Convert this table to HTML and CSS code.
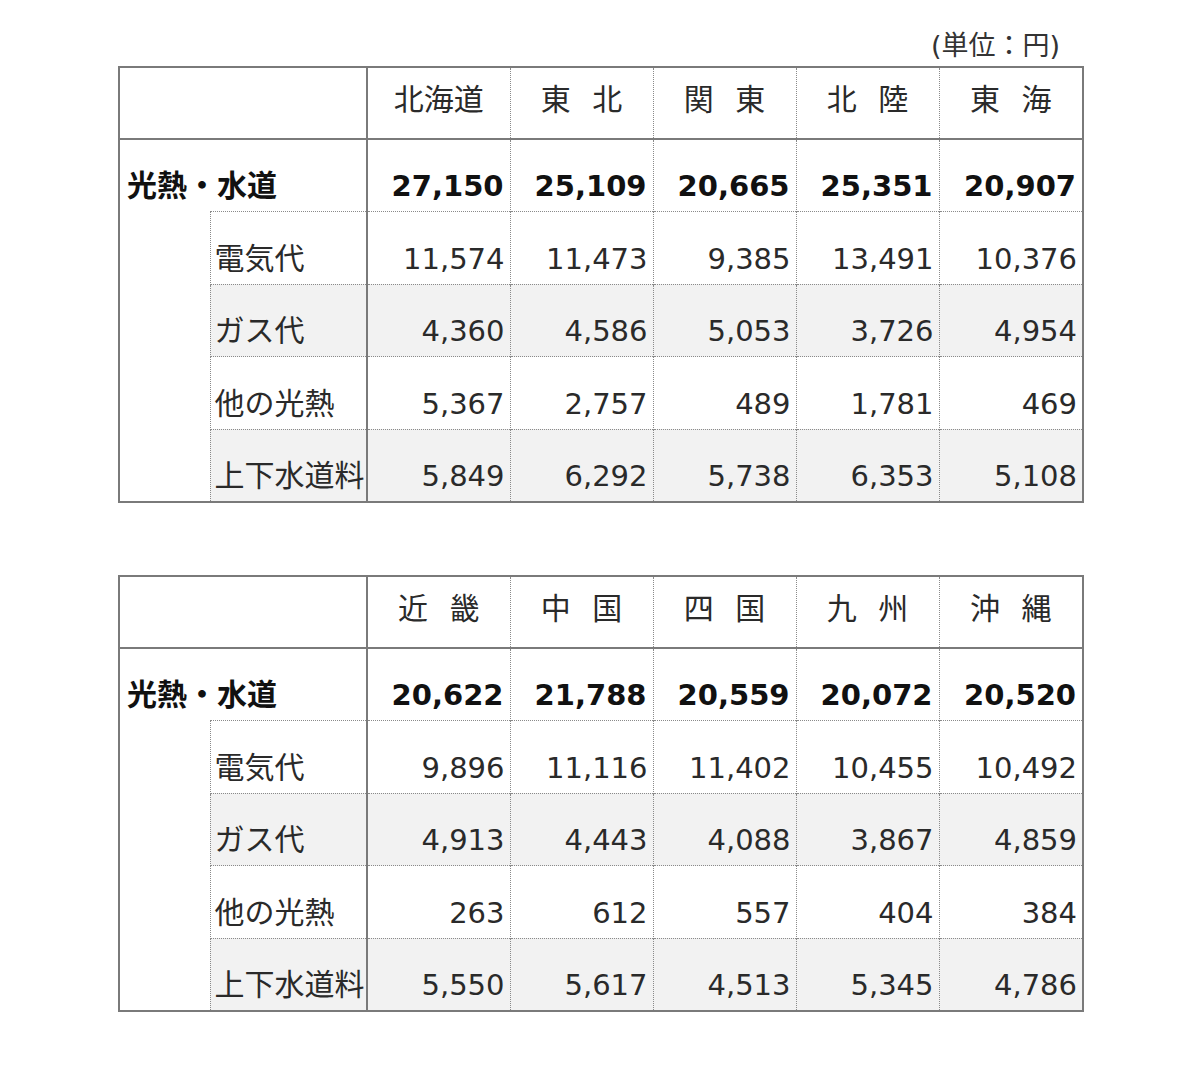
FILE: index.html
```html
<!DOCTYPE html>
<html lang="ja">
<head>
<meta charset="utf-8">
<title>光熱・水道</title>
<link rel="stylesheet" href="styles.css">
</head>
<body>
<div class="page">
  <div class="unit">(単位：円)</div>
  <table class="grid">
    <colgroup>
      <col class="c-indent"><col class="c-item"><col class="c-num"><col class="c-num"><col class="c-num"><col class="c-num"><col class="c-last">
    </colgroup>
    <tr class="head">
      <th colspan="2" class="blank"></th>
      <th class="first">北海道</th><th>東 北</th><th>関 東</th><th>北 陸</th><th>東 海</th>
    </tr>
    <tr class="total">
      <th colspan="2" class="cat">光熱・水道</th>
      <td class="first">27,150</td><td>25,109</td><td>20,665</td><td>25,351</td><td>20,907</td>
    </tr>
    <tr class="sub">
      <td rowspan="4" class="indent"></td>
      <th class="item">電気代</th>
      <td class="first">11,574</td><td>11,473</td><td>9,385</td><td>13,491</td><td>10,376</td>
    </tr>
    <tr class="sub alt">
      <th class="item">ガス代</th>
      <td class="first">4,360</td><td>4,586</td><td>5,053</td><td>3,726</td><td>4,954</td>
    </tr>
    <tr class="sub">
      <th class="item">他の光熱</th>
      <td class="first">5,367</td><td>2,757</td><td>489</td><td>1,781</td><td>469</td>
    </tr>
    <tr class="sub alt">
      <th class="item">上下水道料</th>
      <td class="first">5,849</td><td>6,292</td><td>5,738</td><td>6,353</td><td>5,108</td>
    </tr>
  </table>

  <table class="grid second">
    <colgroup>
      <col class="c-indent"><col class="c-item"><col class="c-num"><col class="c-num"><col class="c-num"><col class="c-num"><col class="c-last">
    </colgroup>
    <tr class="head">
      <th colspan="2" class="blank"></th>
      <th class="first">近 畿</th><th>中 国</th><th>四 国</th><th>九 州</th><th>沖 縄</th>
    </tr>
    <tr class="total">
      <th colspan="2" class="cat">光熱・水道</th>
      <td class="first">20,622</td><td>21,788</td><td>20,559</td><td>20,072</td><td>20,520</td>
    </tr>
    <tr class="sub">
      <td rowspan="4" class="indent"></td>
      <th class="item">電気代</th>
      <td class="first">9,896</td><td>11,116</td><td>11,402</td><td>10,455</td><td>10,492</td>
    </tr>
    <tr class="sub alt">
      <th class="item">ガス代</th>
      <td class="first">4,913</td><td>4,443</td><td>4,088</td><td>3,867</td><td>4,859</td>
    </tr>
    <tr class="sub">
      <th class="item">他の光熱</th>
      <td class="first">263</td><td>612</td><td>557</td><td>404</td><td>384</td>
    </tr>
    <tr class="sub alt">
      <th class="item">上下水道料</th>
      <td class="first">5,550</td><td>5,617</td><td>4,513</td><td>5,345</td><td>4,786</td>
    </tr>
  </table>
</div>
</body>
</html>
```

FILE: styles.css
```css
html, body {
  margin: 0;
  padding: 0;
  background: #ffffff;
}

body {
  font-family: "DejaVu Sans", "Noto Sans CJK JP", sans-serif;
  color: #1e1e1e;
}

.page {
  width: 964px;
  margin-left: 118px;
  padding-top: 29px;
}

.unit {
  text-align: right;
  font-size: 27px;
  line-height: 34px;
  padding-right: 22px;
  margin-bottom: 3px;
  color: #333;
}

.grid {
  width: 964px;
  border-collapse: collapse;
  table-layout: fixed;
  border: 2px solid #7a7a7a;
}

.grid.second {
  margin-top: 72px;
}

.c-indent { width: 91px; }
.c-item { width: 157px; }
.c-num { width: 143px; }
.c-last { width: 144px; }

.grid th,
.grid td {
  padding: 0;
  border: none;
  font-weight: normal;
}

/* dotted vertical separators between data columns */
.grid td,
.grid .head th {
  border-left: 1px dotted #8a8a8a;
}

.grid .first,
.grid .head th.first {
  border-left: 2px solid #7a7a7a;
}

.grid .head th.blank {
  border-left: none;
}

/* header row */
.head th {
  height: 64px;
  font-size: 30px;
  line-height: 40px;
  text-align: center;
  vertical-align: middle;
  padding-bottom: 6px;
  word-spacing: 12px;
  color: #2a2a2a;
  border-bottom: 2px solid #7a7a7a;
}

/* total row */
.total th,
.total td {
  height: 66px;
  vertical-align: bottom;
  font-weight: bold;
  line-height: 40px;
  padding-bottom: 5px;
  color: #111;
}

.total th.cat {
  text-align: left;
  padding-left: 7px;
  font-size: 30px;
}

.total td {
  font-size: 29px;
  text-align: right;
  padding-right: 6px;
}

/* sub rows */
.sub th,
.sub td {
  height: 66.5px;
  vertical-align: bottom;
  line-height: 40px;
  padding-bottom: 5px;
}

.sub td.indent {
  border-left: none;
  background: #ffffff;
}

.sub th.item {
  text-align: left;
  padding-left: 4px;
  font-size: 30px;
  white-space: nowrap;
  overflow: visible;
  border-left: 1px dotted #8a8a8a;
  border-top: 1px dotted #8a8a8a;
  color: #2a2a2a;
}

.sub td {
  font-size: 29px;
  text-align: right;
  padding-right: 5px;
  border-top: 1px dotted #8a8a8a;
  color: #2a2a2a;
}

.sub td.indent {
  border-top: none;
}

.sub.alt th.item,
.sub.alt td {
  background: #f2f2f2;
}
```
